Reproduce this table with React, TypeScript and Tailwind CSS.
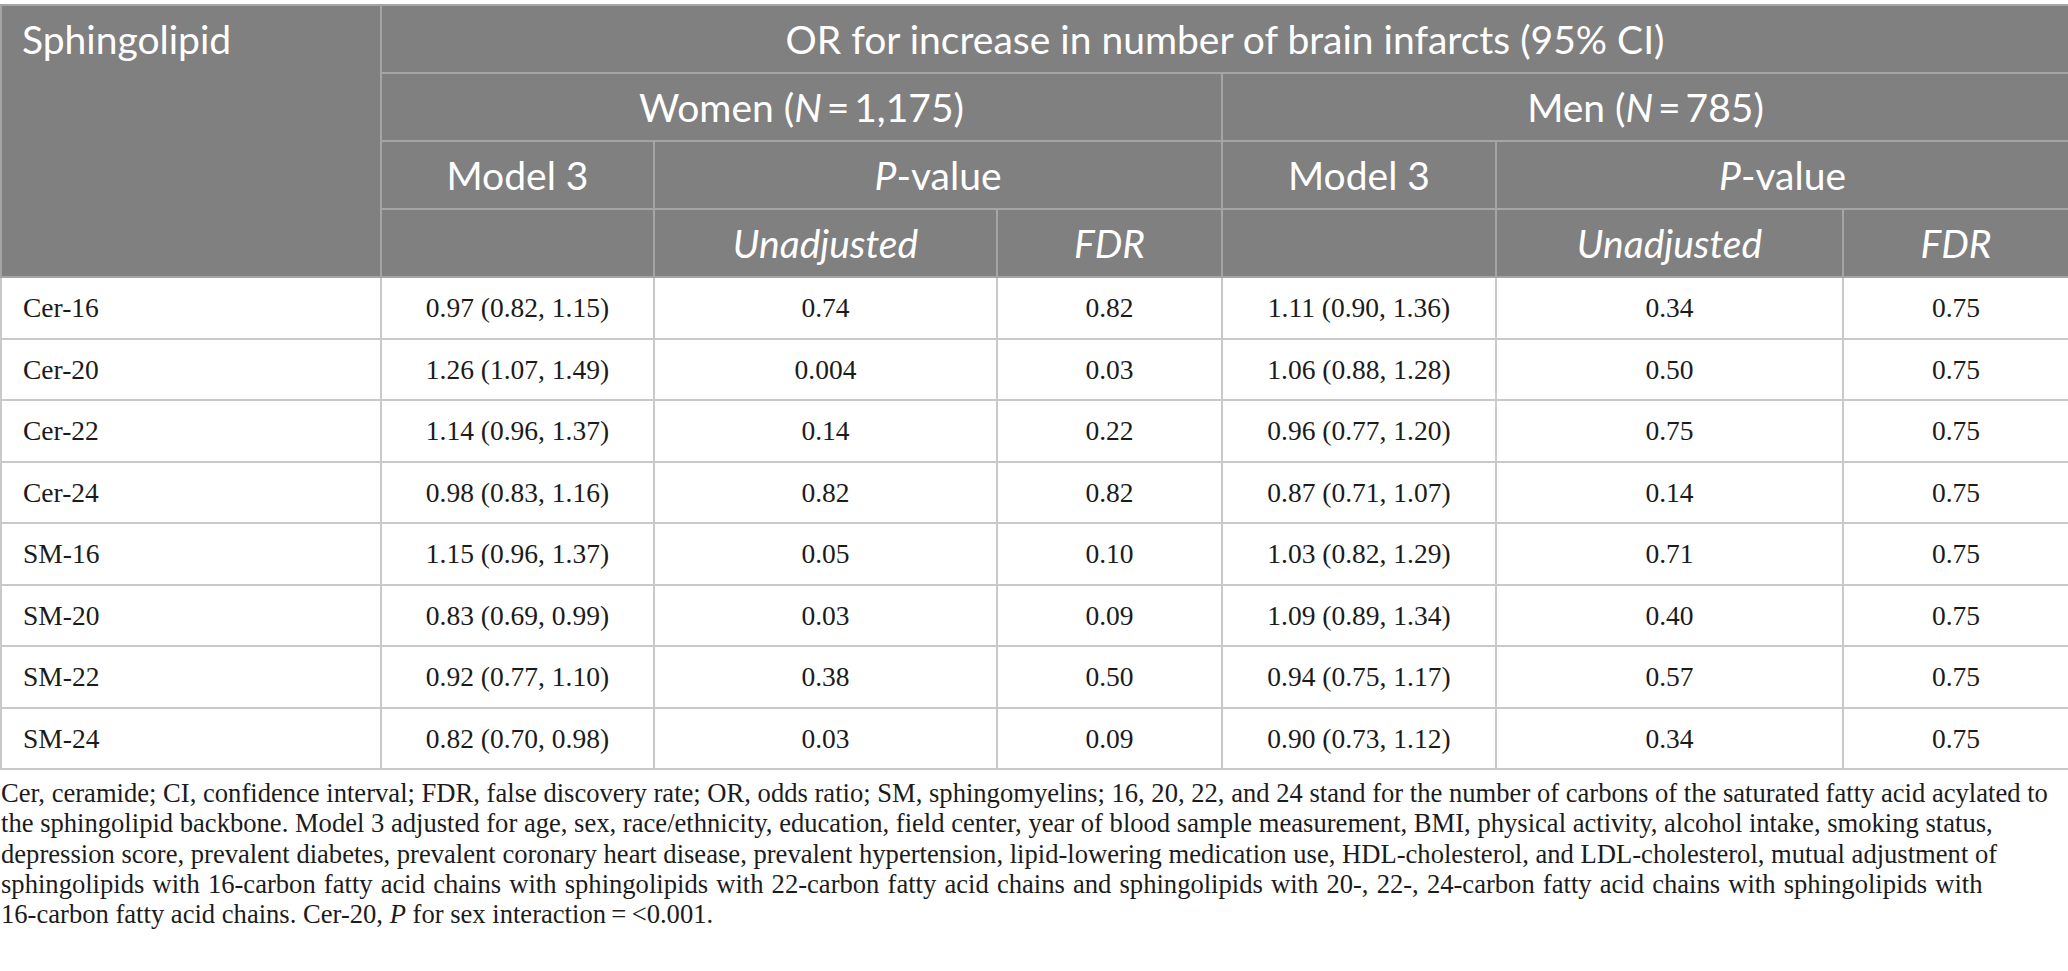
import React from 'react'

type Row = {
  name: string
  wModel: string
  wUnadj: string
  wFdr: string
  mModel: string
  mUnadj: string
  mFdr: string
}

const rows: Row[] = [
  { name: 'Cer-16', wModel: '0.97 (0.82, 1.15)', wUnadj: '0.74', wFdr: '0.82', mModel: '1.11 (0.90, 1.36)', mUnadj: '0.34', mFdr: '0.75' },
  { name: 'Cer-20', wModel: '1.26 (1.07, 1.49)', wUnadj: '0.004', wFdr: '0.03', mModel: '1.06 (0.88, 1.28)', mUnadj: '0.50', mFdr: '0.75' },
  { name: 'Cer-22', wModel: '1.14 (0.96, 1.37)', wUnadj: '0.14', wFdr: '0.22', mModel: '0.96 (0.77, 1.20)', mUnadj: '0.75', mFdr: '0.75' },
  { name: 'Cer-24', wModel: '0.98 (0.83, 1.16)', wUnadj: '0.82', wFdr: '0.82', mModel: '0.87 (0.71, 1.07)', mUnadj: '0.14', mFdr: '0.75' },
  { name: 'SM-16', wModel: '1.15 (0.96, 1.37)', wUnadj: '0.05', wFdr: '0.10', mModel: '1.03 (0.82, 1.29)', mUnadj: '0.71', mFdr: '0.75' },
  { name: 'SM-20', wModel: '0.83 (0.69, 0.99)', wUnadj: '0.03', wFdr: '0.09', mModel: '1.09 (0.89, 1.34)', mUnadj: '0.40', mFdr: '0.75' },
  { name: 'SM-22', wModel: '0.92 (0.77, 1.10)', wUnadj: '0.38', wFdr: '0.50', mModel: '0.94 (0.75, 1.17)', mUnadj: '0.57', mFdr: '0.75' },
  { name: 'SM-24', wModel: '0.82 (0.70, 0.98)', wUnadj: '0.03', wFdr: '0.09', mModel: '0.90 (0.73, 1.12)', mUnadj: '0.34', mFdr: '0.75' },
]

const th = 'border-2 border-[#a4a5a4] font-normal text-center align-middle'
const td = 'border-2 border-[#c9c9c9] text-center align-middle'

export default function App() {
  return (
    <div className="w-[2068px] bg-white pt-[4px] text-[#1b1b1b]">
      <table className="w-full table-fixed border-collapse border-2 border-[#c9c9c9]">
        <colgroup>
          <col className="w-[380px]" />
          <col className="w-[273px]" />
          <col className="w-[343px]" />
          <col className="w-[225px]" />
          <col className="w-[274px]" />
          <col className="w-[347px]" />
          <col className="w-[226px]" />
        </colgroup>
        <thead className="bg-[#7f807f] text-white font-['Lato','Open_Sans',sans-serif] text-[39px] leading-none">
          <tr className="h-[68px]">
            <th rowSpan={4} className="border-2 border-[#a4a5a4] font-normal text-left align-top pl-[20px] pt-[14px]">
              Sphingolipid
            </th>
            <th colSpan={6} className={th}>OR for increase in number of brain infarcts (95% CI)</th>
          </tr>
          <tr className="h-[68px]">
            <th colSpan={3} className={th}>
              Women (<i>N</i>{'\u2009=\u2009'}1,175)
            </th>
            <th colSpan={3} className={th}>
              Men (<i>N</i>{'\u2009=\u2009'}785)
            </th>
          </tr>
          <tr className="h-[68px]">
            <th className={th}>Model 3</th>
            <th colSpan={2} className={th}>
              <i>P</i>-value
            </th>
            <th className={th}>Model 3</th>
            <th colSpan={2} className={th}>
              <i>P</i>-value
            </th>
          </tr>
          <tr className="h-[68px]">
            <th className={th}></th>
            <th className={`${th} italic`}>Unadjusted</th>
            <th className={`${th} italic`}>FDR</th>
            <th className={th}></th>
            <th className={`${th} italic`}>Unadjusted</th>
            <th className={`${th} italic`}>FDR</th>
          </tr>
        </thead>
        <tbody className="font-['Liberation_Serif','Times_New_Roman',serif] text-[27.5px] leading-none">
          {rows.map((r) => (
            <tr key={r.name} className="h-[61.5px]">
              <td className="border-2 border-[#c9c9c9] text-left align-middle pl-[21px]">{r.name}</td>
              <td className={td}>{r.wModel}</td>
              <td className={td}>{r.wUnadj}</td>
              <td className={td}>{r.wFdr}</td>
              <td className={td}>{r.mModel}</td>
              <td className={td}>{r.mUnadj}</td>
              <td className={td}>{r.mFdr}</td>
            </tr>
          ))}
        </tbody>
      </table>

      {/* footnote lines broken as in the source figure */}
      <div className="mt-[8px] pl-[1px] font-['Liberation_Serif','Times_New_Roman',serif] text-[26.6px] leading-[30.3px] whitespace-nowrap">
        <div>
          Cer, ceramide; CI, confidence interval; FDR, false discovery rate; OR, odds ratio; SM, sphingomyelins; 16, 20, 22, and 24 stand for the number of carbons of the saturated fatty acid acylated to
        </div>
        <div>
          the sphingolipid backbone. Model 3 adjusted for age, sex, race/ethnicity, education, field center, year of blood sample measurement, BMI, physical activity, alcohol intake, smoking status,
        </div>
        <div>
          depression score, prevalent diabetes, prevalent coronary heart disease, prevalent hypertension, lipid-lowering medication use, HDL-cholesterol, and LDL-cholesterol, mutual adjustment of
        </div>
        <div className="[word-spacing:1.5px]">
          sphingolipids with 16-carbon fatty acid chains with sphingolipids with 22-carbon fatty acid chains and sphingolipids with 20-, 22-, 24-carbon fatty acid chains with sphingolipids with
        </div>
        <div>
          16-carbon fatty acid chains. Cer-20, <i>P</i> for sex interaction{'\u2009=\u2009'}&lt;0.001.
        </div>
      </div>
    </div>
  )
}
